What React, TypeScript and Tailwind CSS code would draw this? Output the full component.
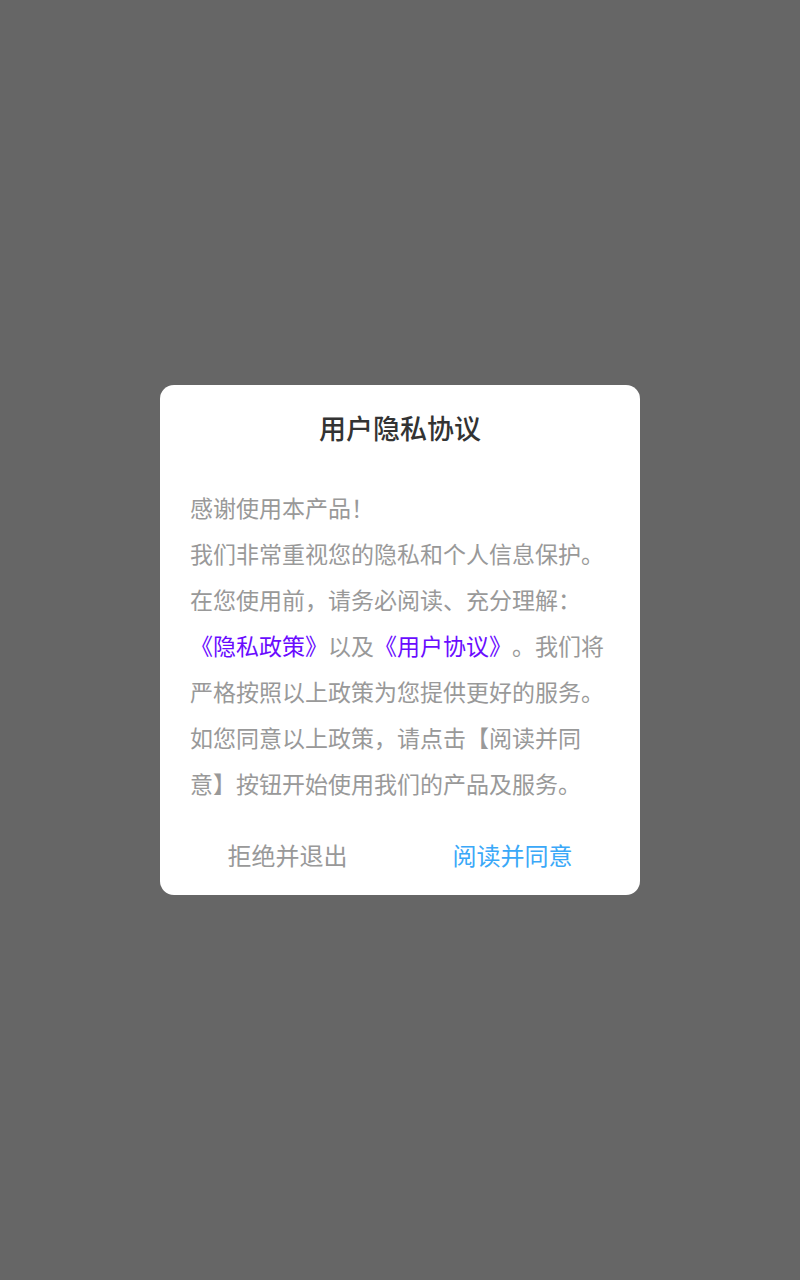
export default function App() {
  return (
    <div
      className="w-[800px] h-[1280px] bg-[#666666] flex items-center justify-center"
      style={{ fontFamily: '"Noto Sans CJK SC", "Noto Sans", sans-serif' }}
    >
      <div className="w-[480px] bg-white rounded-[14px] flex flex-col">
        <h1 className="pt-[27px] text-center text-[27px] leading-[32px] font-medium text-[#333333]">
          用户隐私协议
        </h1>
        <p className="mt-[40px] px-[30px] text-[23px] leading-[46px] text-[#999999] [text-spacing-trim:space-all]">
          感谢使用本产品！
          <br />
          我们非常重视您的隐私和个人信息保护。在您使用前，请务必阅读、充分理解：
          <span className="text-[#6a0cff]">《隐私政策》</span>以及
          <span className="text-[#6a0cff]">《用户协议》</span>
          。我们将严格按照以上政策为您提供更好的服务。如您同意以上政策，请点击【阅读并同意】按钮开始使用我们的产品及服务。
        </p>
        <div className="flex px-[15px] mt-[31px] pb-[22px]">
          <button className="flex-1 text-center text-[24px] leading-[36px] text-[#999999]">
            拒绝并退出
          </button>
          <button className="flex-1 text-center text-[24px] leading-[36px] text-[#3aa8f8]">
            阅读并同意
          </button>
        </div>
      </div>
    </div>
  )
}
